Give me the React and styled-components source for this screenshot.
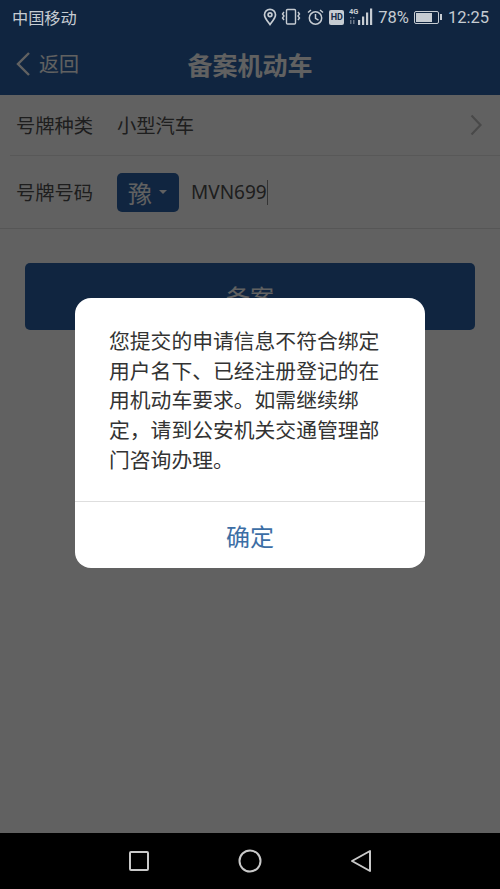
import React from "react";
import styled, { createGlobalStyle } from "styled-components";

const GlobalStyle = createGlobalStyle`
  html, body {
    margin: 0;
    padding: 0;
    background: #000;
  }
  body {
    font-family: "Noto Sans CJK SC", "Noto Sans", sans-serif;
  }
`;

const App = () => {
  return (
    <Phone>
      <GlobalStyle />
      <Screen>
        <Header>
          <StatusBar>
            <Carrier>中国移动</Carrier>
            <StatusIcons>
              <svg width="14" height="18" viewBox="0 0 14 18" fill="none" stroke="#c6ccd2" strokeWidth="1.7">
                <path d="M7 16.5C4 12.6 1.5 10 1.5 6.8a5.5 5.5 0 0 1 11 0C12.5 10 10 12.6 7 16.5z" />
                <circle cx="7" cy="6.8" r="1.9" />
              </svg>
              <svg width="20" height="18" viewBox="0 0 20 18" fill="none" stroke="#c6ccd2" strokeWidth="1.4" style={{ marginLeft: 4 }}>
                <rect x="5.5" y="1.5" width="9" height="14.5" rx="1" />
                <path d="M3 4 1.5 6 3 8 1.5 10 3 12 M17 4l1.5 2L17 8l1.5 2L17 12" />
              </svg>
              <svg width="17" height="18" viewBox="0 0 17 18" fill="none" stroke="#c6ccd2" strokeWidth="1.5" style={{ marginLeft: 6 }}>
                <circle cx="8.5" cy="10" r="6.2" />
                <path d="M8.5 6v4.3l3 1.8M1 4.5 4 2M16 4.5 13 2" />
              </svg>
              <HdBadge>HD</HdBadge>
              <svg width="25" height="20" viewBox="0 0 25 20" fill="#c6ccd2" style={{ marginLeft: 5 }}>
                <text x="0" y="7" fontSize="7.5" fontWeight="700" fontFamily="Roboto, sans-serif">4G</text>
                <rect x="1" y="10" width="1.5" height="1.5" opacity=".5" />
                <rect x="4" y="10" width="1.5" height="1.5" opacity=".5" />
                <rect x="1" y="13" width="1.5" height="4" opacity=".5" />
                <rect x="4" y="13" width="1.5" height="4" opacity=".5" />
                <rect x="9" y="13" width="2.2" height="5" />
                <rect x="13" y="9.5" width="2.2" height="8.5" />
                <rect x="17" y="5.5" width="2.2" height="12.5" />
                <rect x="21" y="1.5" width="2.2" height="16.5" />
              </svg>
              <Percent>78%</Percent>
              <Battery>
                <BatteryFill $level={78} />
              </Battery>
              <BatteryTip />
              <Clock>12:25</Clock>
            </StatusIcons>
          </StatusBar>
          <NavBar>
            <BackLink>
              <svg width="16" height="26" viewBox="0 0 16 26" fill="none" stroke="#fff" strokeWidth="2.4">
                <path d="M14 2 3 13l11 11" />
              </svg>
              <span>返回</span>
            </BackLink>
            <Title>备案机动车</Title>
          </NavBar>
        </Header>
        <Form>
          <Row $height={60}>
            <Label>号牌种类</Label>
            <Value>小型汽车</Value>
            <RowArrow width="12" height="22" viewBox="0 0 12 22" fill="none" stroke="#c0c0c0" strokeWidth="2.2">
              <path d="m1.5 1.5 9 9.5-9 9.5" />
            </RowArrow>
          </Row>
          <Row $height={72} $last>
            <Label>号牌号码</Label>
            <ProvinceSelect>
              豫
              <Caret />
            </ProvinceSelect>
            <PlateInput>
              MVN699
              <Cursor />
            </PlateInput>
          </Row>
        </Form>
        <SubmitButton>备案</SubmitButton>
        <Overlay>
          <Dialog>
            <Message>
              您提交的申请信息不符合绑定用户名下、已经注册登记的在用机动车要求。如需继续绑定，请到公安机关交通管理部门咨询办理。
            </Message>
            <ConfirmButton>确定</ConfirmButton>
          </Dialog>
        </Overlay>
      </Screen>
      <SystemNav>
        <svg width="22" height="22" viewBox="0 0 22 22" fill="none" stroke="#c9c9c9" strokeWidth="2">
          <rect x="2" y="2" width="18" height="18" rx="1" />
        </svg>
        <svg width="24" height="24" viewBox="0 0 24 24" fill="none" stroke="#c9c9c9" strokeWidth="2">
          <circle cx="12" cy="12" r="10.5" />
        </svg>
        <svg width="22" height="24" viewBox="0 0 22 24" fill="none" stroke="#c9c9c9" strokeWidth="2" strokeLinejoin="round">
          <path d="M20 2v20L2 12z" />
        </svg>
      </SystemNav>
    </Phone>
  );
};
export default App;

const Phone = styled.div`
  width: 500px;
  height: 889px;
  display: flex;
  flex-direction: column;
  overflow: hidden;
`;
const Screen = styled.div`
  position: relative;
  height: 833px;
  background: #fff;
`;
const Header = styled.div`
  height: 95px;
  background: #2b63a8;
`;
const StatusBar = styled.div`
  position: relative;
  z-index: 2;
  height: 34px;
  display: flex;
  align-items: center;
  justify-content: space-between;
  padding: 0 11px 0 12px;
  color: #c6ccd2;
`;
const Carrier = styled.div`
  font-size: 16.2px;
  line-height: 34px;
`;
const StatusIcons = styled.div`
  display: flex;
  align-items: center;
  font-family: Roboto, sans-serif;
`;
const HdBadge = styled.div`
  width: 15px;
  height: 15px;
  margin-left: 5px;
  border-radius: 2px;
  background: #c6ccd2;
  color: #122a47;
  font-size: 9px;
  font-weight: 700;
  line-height: 15px;
  text-align: center;
`;
const Percent = styled.div`
  margin-left: 4px;
  font-size: 16.5px;
`;
const Battery = styled.div`
  box-sizing: border-box;
  width: 25px;
  height: 13px;
  margin-left: 5px;
  padding: 1px;
  border: 1px solid #c6ccd2;
  border-radius: 2px;
`;
const BatteryFill = styled.div`
  width: ${(p) => p.$level}%;
  height: 100%;
  background: #c6ccd2;
`;
const BatteryTip = styled.div`
  width: 2px;
  height: 6px;
  margin-left: 1px;
  background: #c6ccd2;
`;
const Clock = styled.div`
  margin-left: 6px;
  font-size: 16.5px;
`;
const NavBar = styled.div`
  height: 61px;
  display: flex;
  align-items: center;
  justify-content: center;
  position: relative;
`;
const BackLink = styled.div`
  position: absolute;
  left: 15px;
  top: 17px;
  display: flex;
  align-items: center;
  gap: 8px;
  color: #fff;
  font-size: 20px;
  line-height: 26px;
`;
const Title = styled.div`
  color: #fff;
  font-size: 25px;
  font-weight: 700;
  line-height: 60px;
  margin-bottom: 2px;
`;
const Form = styled.div`
  background: #fff;
  border-bottom: 1px solid #e2e2e2;
`;
const Row = styled.div`
  height: ${(p) => p.$height}px;
  margin-left: ${(p) => (p.$last ? 0 : 10)}px;
  padding-left: ${(p) => (p.$last ? 17 : 7)}px;
  padding-right: 18px;
  display: flex;
  align-items: center;
  border-bottom: ${(p) => (p.$last ? "none" : "1px solid #e8e8e8")};
`;
const Label = styled.div`
  width: 100px;
  margin-left: -1px;
  padding-right: 1px;
  color: #505050;
  font-size: 19.3px;
  line-height: 28px;
  white-space: nowrap;
`;
const Value = styled.div`
  flex: 1;
  color: #505050;
  font-size: 19.3px;
  line-height: 28px;
`;
const RowArrow = styled.svg`
  flex: none;
`;
const ProvinceSelect = styled.div`
  width: 62px;
  height: 39px;
  box-sizing: border-box;
  padding-left: 11px;
  display: flex;
  align-items: center;
  gap: 7px;
  border-radius: 5px;
  background: #2b63a8;
  color: #fff;
  font-size: 24px;
`;
const Caret = styled.span`
  width: 0;
  height: 0;
  border-left: 4px solid transparent;
  border-right: 4px solid transparent;
  border-top: 4px solid #fff;
`;
const PlateInput = styled.div`
  margin-left: 12px;
  display: flex;
  align-items: center;
  color: #505050;
  font-family: "Noto Sans", sans-serif;
  font-size: 19px;
  line-height: 28px;
`;
const Cursor = styled.span`
  width: 1px;
  height: 25px;
  background: #888;
`;
const SubmitButton = styled.div`
  height: 67px;
  margin: 34px 25px 0;
  border-radius: 5px;
  background: #2b63a8;
  color: #fff;
  font-size: 24px;
  line-height: 67px;
  text-align: center;
`;
const Overlay = styled.div`
  position: absolute;
  inset: 0;
  z-index: 1;
  padding-top: 298px;
  display: flex;
  justify-content: center;
  align-items: flex-start;
  background: rgba(0, 0, 0, 0.62);
`;
const Dialog = styled.div`
  width: 350px;
  height: 270px;
  display: flex;
  flex-direction: column;
  border-radius: 16px;
  background: #fff;
  overflow: hidden;
`;
const Message = styled.div`
  height: 204px;
  box-sizing: border-box;
  padding: 28px 34px 0;
  color: #333;
  font-size: 20.8px;
  line-height: 29.7px;
  border-bottom: 1px solid #dedede;
`;
const ConfirmButton = styled.div`
  flex: 1;
  display: flex;
  align-items: center;
  justify-content: center;
  color: #3c6ea5;
  font-size: 24px;
`;
const SystemNav = styled.div`
  height: 56px;
  background: #000;
  display: grid;
  grid-template-columns: 1fr 1fr 1fr;
  width: 333px;
  margin: 0 auto;
  justify-items: center;
  align-items: center;
`;
